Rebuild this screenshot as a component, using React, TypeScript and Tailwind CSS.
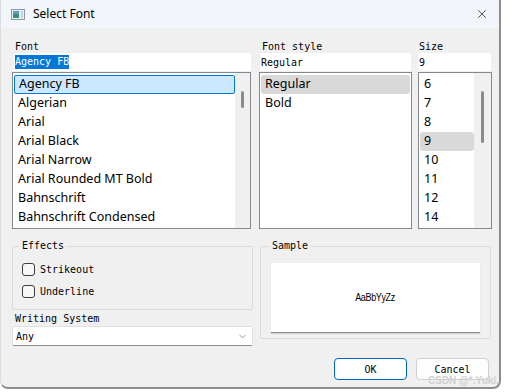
import { X, ChevronDown } from 'lucide-react';

const mono = "font-['DejaVu_Sans_Mono','Liberation_Mono',monospace] text-[10px]";
const ui = "font-['Noto_Sans','Liberation_Sans',sans-serif] text-[12.5px]";

const fonts = [
  'Agency FB',
  'Algerian',
  'Arial',
  'Arial Black',
  'Arial Narrow',
  'Arial Rounded MT Bold',
  'Bahnschrift',
  'Bahnschrift Condensed',
];
const styles = ['Regular', 'Bold'];
const sizes = ['6', '7', '8', '9', '10', '11', '12', '14'];

function Scrollbar({ w, top, h }: { w: string; top: string; h: string }) {
  return (
    <div className={`${w} shrink-0 bg-[#f0f0f0] flex justify-center`}>
      <div className={`w-[3px] ${top} ${h} rounded-full bg-[#8b8b8b]`} />
    </div>
  );
}

function Checkbox({ label }: { label: string }) {
  return (
    <div className="h-[22px] flex items-center gap-[5px] pl-[9px]">
      <div className="w-[13px] h-[13px] rounded-[3px] border border-[#3d3d3d] bg-[#f7f7f7]" />
      <span className={`${mono} text-black`}>{label}</span>
    </div>
  );
}

export default function App() {
  return (
    <div className="w-[510px] h-[392px] bg-white relative overflow-hidden">
      <div className="w-[501px] h-[389px] bg-[#f0f0f0] border-l border-r-2 border-b-2 border-l-[#dcdcdc] border-r-[#8d8d8d] border-b-[#8d8d8d] rounded-b-[8px] flex flex-col">
        {/* title bar */}
        <div className="h-[28px] shrink-0 bg-[#f2f5fa] flex items-center pl-[10px] pr-[10px]">
          <svg width="14" height="11" viewBox="0 0 14 11" className="shrink-0">
            <rect x="0.5" y="0.5" width="13" height="10" fill="#e8eef3" stroke="#8a9aa8" />
            <rect x="2" y="2" width="6" height="7" fill="#3d8d7a" />
            <rect x="2" y="2" width="6" height="3" fill="#5c9bc4" />
            <rect x="10" y="2" width="2" height="7" fill="#c9d4dc" />
          </svg>
          <span className={`${ui} ml-[8px] text-[12px] text-black`}>Select Font</span>
          <X className="ml-auto w-[14px] h-[14px] text-[#222]" strokeWidth={1.3} />
        </div>

        {/* body */}
        <div className="flex-1 flex flex-col pl-[11px] pt-[12px]">
          <div className="flex">
            {/* Font */}
            <div className="w-[239px] flex flex-col">
              <div className={`${mono} h-[13px] leading-[13px] pl-[3px] text-black`}>Font</div>
              <div className="h-[18px] ml-[2px] bg-white flex items-center pl-[1px]">
                <span className={`${mono} bg-[#0078d7] text-white h-[14px] leading-[14px]`}>Agency FB</span>
              </div>
              <div className="mt-[1px] h-[157px] bg-white border border-[#838790] flex">
                <div className="flex-1 pt-[2px] pl-px">
                  {fonts.map((f, i) => (
                    <div
                      key={f}
                      className={`h-[19px] flex items-center pl-[4px] ${ui} text-black ${
                        i === 0 ? 'bg-[#cce8ff] border border-[#0078d7] rounded-[2px] pl-[3px]' : ''
                      }`}
                    >
                      {f}
                    </div>
                  ))}
                </div>
                <Scrollbar w="w-[15px]" top="mt-[18px]" h="h-[17px]" />
              </div>
            </div>

            {/* Font style */}
            <div className="w-[153px] ml-[8px] flex flex-col">
              <div className={`${mono} h-[13px] leading-[13px] pl-[3px] text-black`}>Font style</div>
              <div className={`h-[18px] ml-[1px] mr-[1px] bg-white flex items-center pl-[1px] ${mono} text-black`}>
                Regular
              </div>
              <div className="mt-[1px] h-[157px] bg-white border border-[#838790] p-px pt-[2px]">
                {styles.map((s, i) => (
                  <div
                    key={s}
                    className={`h-[19px] flex items-center pl-[4px] ${ui} text-black ${
                      i === 0 ? 'bg-[#d9d9d9] rounded-[3px]' : ''
                    }`}
                  >
                    {s}
                  </div>
                ))}
              </div>
            </div>

            {/* Size */}
            <div className="w-[74px] ml-[6px] flex flex-col">
              <div className={`${mono} h-[13px] leading-[13px] pl-[1px] text-black`}>Size</div>
              <div className={`h-[18px] mr-[1px] bg-white flex items-center pl-[1px] ${mono} text-black`}>9</div>
              <div className="mt-[1px] h-[157px] bg-white border border-[#838790] flex">
                <div className="flex-1 pt-[2px] pl-px">
                  {sizes.map((s) => (
                    <div
                      key={s}
                      className={`h-[19px] flex items-center pl-[4px] ${ui} text-black ${
                        s === '9' ? 'bg-[#d9d9d9] rounded-[3px]' : ''
                      }`}
                    >
                      {s}
                    </div>
                  ))}
                </div>
                <Scrollbar w="w-[17px]" top="mt-[18px]" h="h-[52px]" />
              </div>
            </div>
          </div>

          {/* lower row */}
          <div className="flex mt-[11px]">
            <div className="w-[241px] flex flex-col">
              <fieldset className="h-[70px] border border-[#dadada] rounded-[2px]">
                <legend className={`${mono} ml-[6px] px-[3px] leading-[12px] text-black`}>Effects</legend>
                <div className="pt-[6px]">
                  <Checkbox label="Strikeout" />
                  <Checkbox label="Underline" />
                </div>
              </fieldset>
              <div className={`${mono} h-[13px] leading-[13px] mt-[2px] pl-[3px] text-black`}>Writing System</div>
              <div className="h-[20px] mt-[1px] bg-white border border-[#e0e0e0] border-b-[#8c8c8c] rounded-[2px] flex items-center pl-[3px] pr-[4px]">
                <span className={`${mono} text-black`}>Any</span>
                <ChevronDown className="ml-auto w-[11px] h-[11px] text-[#555]" strokeWidth={1.3} />
              </div>
            </div>

            <div className="w-[231px] ml-[7px] flex flex-col">
              <fieldset className="h-[99px] border border-[#dadada] rounded-[2px] px-[10px]">
                <legend className={`${mono} ml-[-2px] px-[3px] leading-[12px] text-black`}>Sample</legend>
                <div className="mt-[11px] h-[70px] bg-white border-b border-[#8a8a8a] shadow-[0_1px_1px_rgba(0,0,0,0.12)] flex items-center justify-center">
                  <span className="font-['Liberation_Sans',sans-serif] text-[10px] tracking-[-0.4px] scale-x-90 text-black">
                    AaBbYyZz
                  </span>
                </div>
              </fieldset>
            </div>
          </div>

          {/* buttons */}
          <div className="flex justify-end gap-[9px] mt-[12px] pr-[10px]">
            <button className={`w-[73px] h-[22px] bg-white border-[1.5px] border-[#0067c0] rounded-[4px] ${mono} text-black`}>
              OK
            </button>
            <button className={`w-[73px] h-[22px] bg-[#fdfdfd] border border-[#d0d0d0] rounded-[4px] ${mono} text-black`}>
              Cancel
            </button>
          </div>
        </div>
      </div>

      <div className="absolute left-[428px] top-[375px] whitespace-nowrap font-['Liberation_Sans',sans-serif] text-[10px] leading-[12px] font-bold text-[#cfcfcf]">
        CSDN @*.Yuki.
      </div>
    </div>
  );
}
